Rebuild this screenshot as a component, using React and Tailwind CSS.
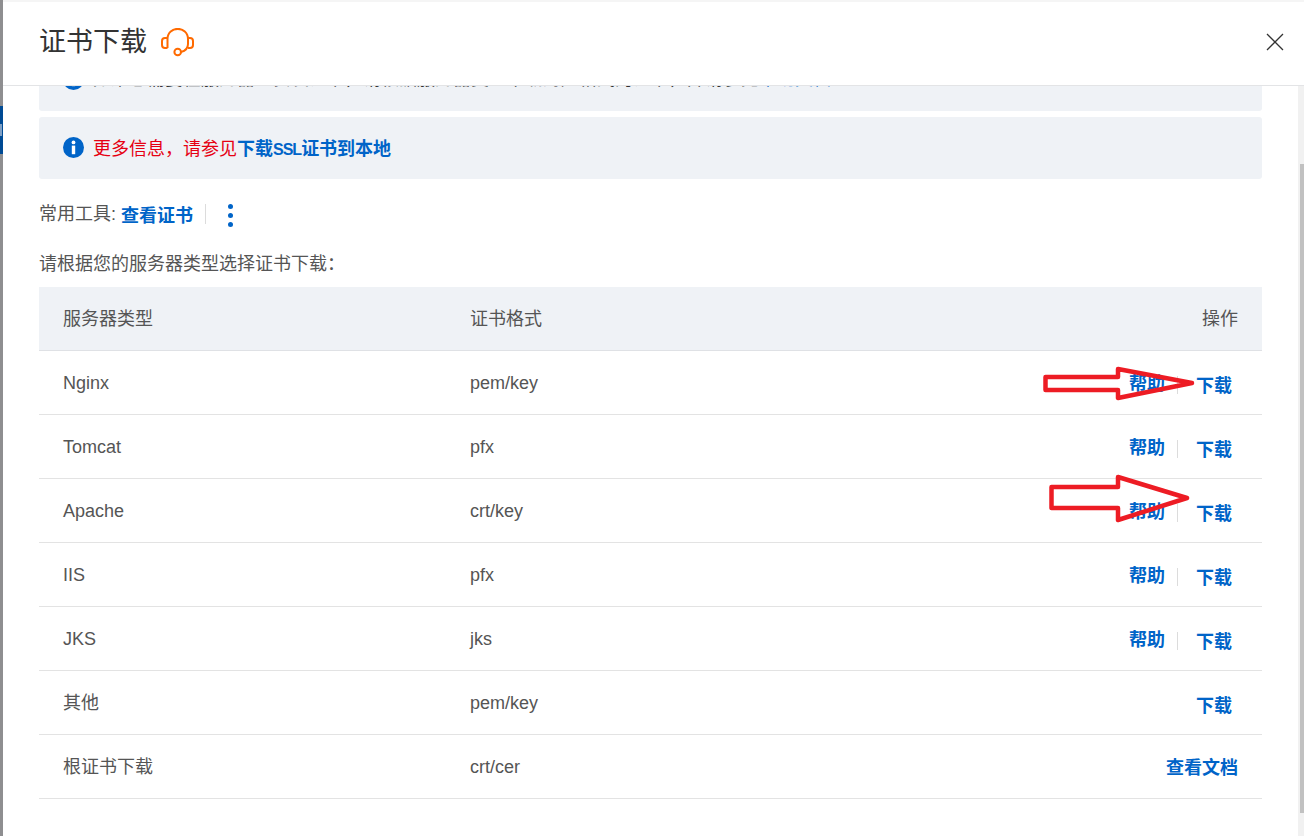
import React from "react";

const FONT = '"Liberation Sans","Noto Sans CJK SC",sans-serif';

const rows = [
  ["Nginx", "pem/key", true],
  ["Tomcat", "pfx", true],
  ["Apache", "crt/key", true],
  ["IIS", "pfx", true],
  ["JKS", "jks", true],
  ["其他", "pem/key", false],
];

function InfoIcon() {
  return (
    <svg width="21" height="21" viewBox="0 0 21 21" className="shrink-0 relative top-[-1px]">
      <circle cx="10.5" cy="10.5" r="10.5" fill="#0064c8" />
      <circle cx="10.5" cy="5.4" r="1.9" fill="#fff" />
      <rect x="8.8" y="8.6" width="3.4" height="8.6" fill="#fff" />
    </svg>
  );
}

function Headset() {
  return (
    <svg width="33" height="30" viewBox="0 0 33 30" fill="none" stroke="#ff6a00" strokeWidth="2" className="shrink-0 relative top-[-1px]">
      <path d="M6.5 20 V11 C6.5 -2.5 27 -2.5 27 11 V16 C27 20 24 23 20 24" />
      <path d="M6.5 10 H4 A3 3 0 0 0 1 13 V17 A3 3 0 0 0 4 20 H6.5" />
      <path d="M27 10 H29 A3 3 0 0 1 32 13 V17 A3 3 0 0 1 29 20 H27" />
      <circle cx="16.7" cy="24" r="3.3" />
    </svg>
  );
}

export default function App() {
  return (
    <div className="w-[1304px] h-[836px] relative overflow-hidden flex bg-white" style={{ fontFamily: FONT }}>
      <div className="w-[3px] h-full bg-[#8e8e90] flex flex-col shrink-0">
        <div className="h-[106px]" />
        <div className="h-[48px] bg-[#004a94] flex items-center">
          <div className="w-[2px] h-[12px] bg-[#7f9fc4]" />
        </div>
      </div>
      <div className="flex-1 flex flex-col min-w-0">
        <div className="h-[86px] shrink-0 border-b border-[#e3e4e6] border-t-2 border-t-[#f5f5f5] flex items-center pl-[36px] pr-[20px] justify-between bg-white">
          <div className="flex items-center gap-[14px]">
            <span className="text-[27px] leading-[36px] text-[#333] relative top-[-2px]">证书下载</span>
            <Headset />
          </div>
          <svg width="18" height="18" viewBox="0 0 18 18" stroke="#333" strokeWidth="1.3" className="relative top-[-2px]">
            <path d="M1 1 L17 17 M17 1 L1 17" />
          </svg>
        </div>
        <div className="flex-1 overflow-hidden flex min-h-0">
          <div className="flex-1 pl-[36px] pr-[36px] min-w-0">
            <div className="-mt-[37px] h-[62px] pb-[2px] bg-[#eff2f6] rounded-[3px] flex items-center pl-[24px] gap-[9px] text-[18px] whitespace-nowrap text-[#333]">
              <span className="shrink-0 flex relative top-[1px]">
                <InfoIcon />
              </span>
              <span>
                如果您需要在服务器上安装证书，请根据服务器类型下载对应格式的证书，并请参见<span className="text-[#0064c8]">帮助文档</span>。
              </span>
            </div>
            <div className="mt-[6px] h-[62px] bg-[#eff2f6] rounded-[3px] flex items-center pl-[24px] gap-[9px] text-[18px]">
              <InfoIcon />
              <span className="text-[#e60012] relative top-[1px]">
                更多信息，请参见
                <span className="text-[#0064c8] font-bold">
                  下载<span className="text-[16px] tracking-[-1px]">SSL</span>证书到本地
                </span>
              </span>
            </div>
            <div className="flex items-center mt-[22px] h-[28px] text-[#555]">
              <span className="text-[18px] relative top-[-1px]">常用工具:</span>
              <span className="ml-[5px] text-[18px] font-bold text-[#0064c8] relative top-[1px]">查看证书</span>
              <span className="ml-[12px] w-px h-[20px] bg-[#dcdcdc] relative top-[-1px]" />
              <span className="ml-[22px] flex flex-col gap-[4px]">
                <span className="w-[5px] h-[5px] rounded-full bg-[#0064c8]" />
                <span className="w-[5px] h-[5px] rounded-full bg-[#0064c8]" />
                <span className="w-[5px] h-[5px] rounded-full bg-[#0064c8]" />
              </span>
            </div>
            <div className="mt-[22px] h-[26px] text-[18px] leading-[26px] text-[#555]">请根据您的服务器类型选择证书下载：</div>
            <div className="mt-[10px]">
              <div className="h-[64px] pt-[2px] bg-[#eff2f6] border-b border-[#dfe1e5] flex items-center text-[18px] text-[#555] px-[24px]">
                <span className="w-[407px]">服务器类型</span>
                <span className="flex-1">证书格式</span>
                <span>操作</span>
              </div>
              {rows.map(([name, fmt, help]) => (
                <div key={name} className="h-[64px] pt-[2px] border-b border-[#e3e3e3] flex items-center text-[18px] text-[#555] pl-[24px] pr-[30px]">
                  <span className="w-[407px]">{name}</span>
                  <span className="flex-1">{fmt}</span>
                  {help && <span className="font-bold text-[#0064c8] relative top-[1px]">帮助</span>}
                  {help && <span className="w-px h-[18px] bg-[#dcdcdc] ml-[12px] mr-[18px] relative top-[1px]" />}
                  <span className="font-bold text-[#0064c8] relative top-[3px]">下载</span>
                </div>
              ))}
              <div className="h-[64px] pt-[2px] border-b border-[#e3e3e3] flex items-center text-[18px] text-[#555] px-[24px]">
                <span className="w-[407px]">根证书下载</span>
                <span className="flex-1">crt/cer</span>
                <span className="font-bold text-[#0064c8] relative top-[1px]">查看文档</span>
              </div>
            </div>
          </div>
          <div className="w-[6px] shrink-0 bg-[#f1f1f1] flex flex-col items-end">
            <div className="h-[78px]" />
            <div className="h-[649px] w-[4px] bg-[#c1c1c1]" />
          </div>
        </div>
      </div>
      <svg width="160" height="40" viewBox="0 0 160 40" fill="none" className="absolute left-[1040px] top-[364px] pointer-events-none">
        <path d="M5.5 13 H78 V5 L152 19 L78 34 V26 H5.5 Z" stroke="#ed1c24" strokeWidth="4.5" strokeLinejoin="round" />
      </svg>
      <svg width="150" height="56" viewBox="0 0 150 56" fill="none" className="absolute left-[1046px] top-[472px] pointer-events-none">
        <path d="M5.5 15 H72 V5 L141 26 L72 48 V36 H5.5 Z" stroke="#ed1c24" strokeWidth="4.5" strokeLinejoin="round" />
      </svg>
    </div>
  );
}
